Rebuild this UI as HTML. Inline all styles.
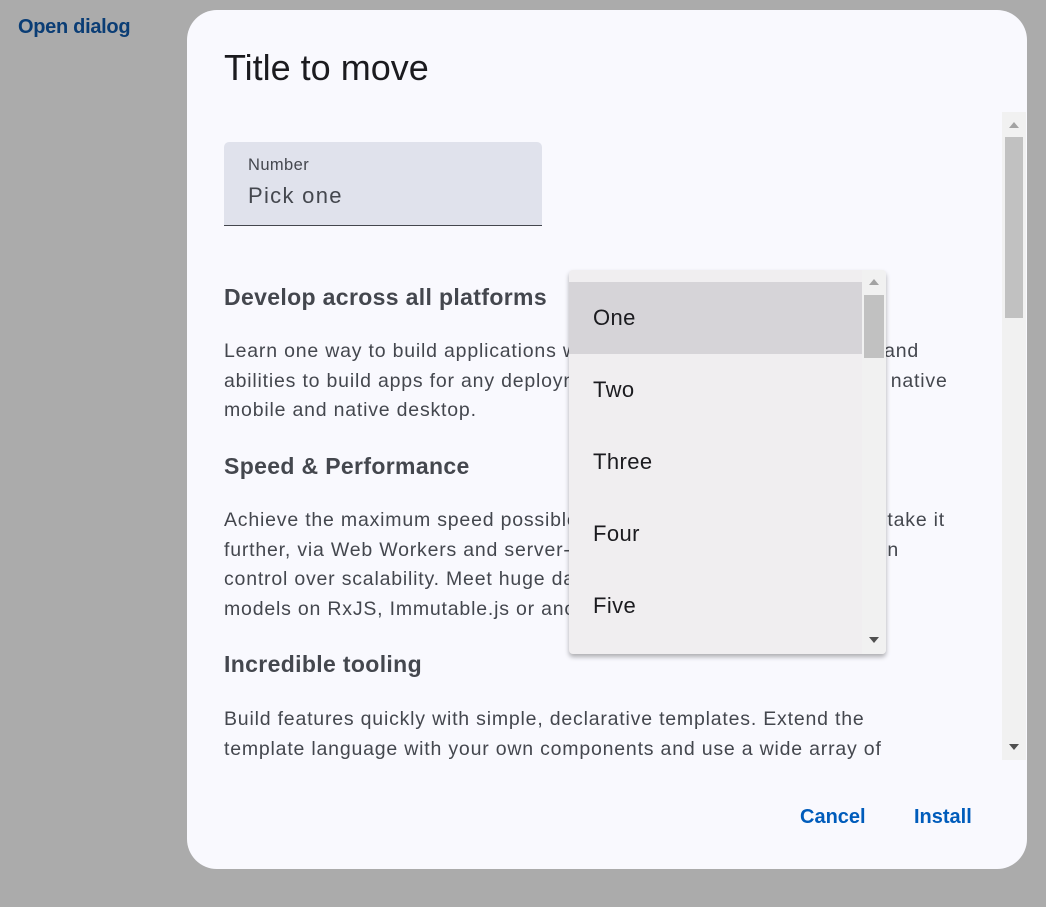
<!DOCTYPE html>
<html><head><style>
body{margin:0;width:1046px;height:907px;background:#ababab;font-family:"Liberation Sans",Arial,sans-serif;position:relative;overflow:hidden}
.a{position:absolute;white-space:nowrap}
#open{left:18px;top:16px;font-size:20px;color:#0a3d75;font-weight:bold;letter-spacing:-0.3px}
#dlg{position:absolute;left:187px;top:10px;width:840px;height:859px;background:#f9f9fe;border-radius:30px;overflow:hidden}
#title{left:37px;top:37px;font-size:36px;color:#1b1b1f}
#field{left:37px;top:132px;width:318px;height:83px;background:#e0e2ec;border-radius:5px 5px 0 0;border-bottom:1px solid #44474e}
.lab{left:24px;top:14px;font-size:16.5px;color:#44474e;letter-spacing:0.4px}
.val{left:24px;top:41px;font-size:22px;color:#44474e;letter-spacing:1.3px}
h3{position:absolute;margin:0;left:37px;font-size:23px;font-weight:bold;color:#44474e;white-space:nowrap;letter-spacing:0.35px}
p{position:absolute;margin:0;left:37px;font-size:19.5px;line-height:29.5px;color:#44474e;white-space:nowrap;letter-spacing:0.8px}
#sb{left:815px;top:102px;width:24px;height:648px;background:#f1f1f1}
#thumb{left:818px;top:127px;width:18px;height:181px;background:#c1c1c1}
.btn{top:796px;font-size:20px;font-weight:bold;color:#005cbb}
#dd{left:569px;top:270px;width:317px;height:384px;background:#f0eef0;border-radius:4px;box-shadow:0 3px 5px rgba(0,0,0,.3);overflow:hidden}
.opt{position:absolute;left:0;width:293px;height:72px;font-size:22px;color:#1b1b1f;line-height:72px;text-indent:24px;letter-spacing:0.4px}
</style></head><body>
<div class="a" id="open">Open dialog</div>
<div id="dlg">
<div class="a" id="title">Title to move</div>
<div class="a" id="field"><div class="a lab">Number</div><div class="a val">Pick one</div></div>
<h3 style="top:274px">Develop across all platforms</h3>
<p style="top:327px">Learn one way to build applications with Angular and reuse your code and<br>abilities to build apps for any deployment target. For web, mobile web, native<br>mobile and native desktop.</p>
<h3 style="top:443px">Speed &amp; Performance</h3>
<p style="top:496px">Achieve the maximum speed possible on the Web Platform today, and take it<br>further, via Web Workers and server-side rendering. Angular puts you in<br>control over scalability. Meet huge data requirements by building data<br>models on RxJS, Immutable.js or another push-model.</p>
<h3 style="top:641px">Incredible tooling</h3>
<p style="top:695px">Build features quickly with simple, declarative templates. Extend the<br>template language with your own components and use a wide array of</p>
<div style="position:absolute;left:0;top:750px;width:815px;height:30px;background:#f9f9fe"></div>
<div class="a" id="sb"></div><div class="a" id="thumb"></div>
<div class="a" style="left:822px;top:112px;width:0;height:0;border-left:5px solid transparent;border-right:5px solid transparent;border-bottom:6px solid #a3a3a3"></div>
<div class="a" style="left:822px;top:734px;width:0;height:0;border-left:5px solid transparent;border-right:5px solid transparent;border-top:6px solid #505050"></div>
<div class="a btn" style="left:613px">Cancel</div>
<div class="a btn" style="left:727px">Install</div>
</div>
<div class="a" id="dd">
<div class="opt" style="top:12px;background:#d6d4d8">One</div>
<div class="opt" style="top:84px">Two</div>
<div class="opt" style="top:156px">Three</div>
<div class="opt" style="top:228px">Four</div>
<div class="opt" style="top:300px">Five</div>
<div class="a" style="left:293px;top:0;width:24px;height:384px;background:#f1f1f1"></div>
<div class="a" style="left:295px;top:25px;width:20px;height:63px;background:#c1c1c1"></div>
<div class="a" style="left:300px;top:9px;width:0;height:0;border-left:5px solid transparent;border-right:5px solid transparent;border-bottom:6px solid #a3a3a3"></div>
<div class="a" style="left:300px;top:367px;width:0;height:0;border-left:5px solid transparent;border-right:5px solid transparent;border-top:6px solid #505050"></div>
</div>
</body></html>
